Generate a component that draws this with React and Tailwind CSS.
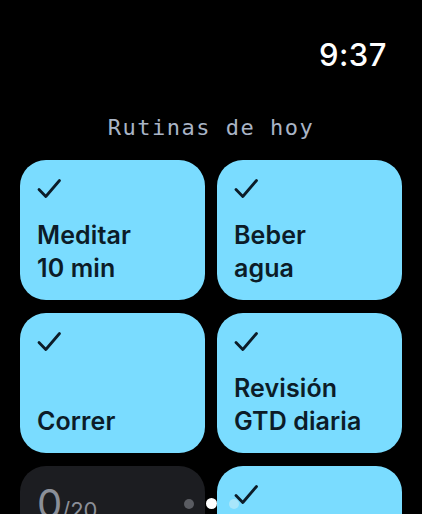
export default function App() {
  const routines = [
    { label: ["Meditar", "10 min"], done: true },
    { label: ["Beber", "agua"], done: true },
    { label: ["Correr"], done: true },
    { label: ["Revisión", "GTD diaria"], done: true },
  ];

  const Check = () => (
    <svg width="25" height="22" viewBox="0 0 25 22" className="text-[#0c1c28]">
      <path
        d="M2 11.5 L8.8 18.5 L22.5 2.5"
        fill="none"
        stroke="currentColor"
        strokeWidth="2.8"
        strokeLinecap="round"
        strokeLinejoin="round"
      />
    </svg>
  );

  return (
    <div className="relative w-[422px] h-[514px] overflow-hidden bg-black font-['Inter','Noto_Sans',sans-serif]">
      {/* Status bar */}
      <div className="flex justify-end pr-[35px] pt-[39px] h-[117px]">
        <span className="text-white text-[31px] font-medium leading-none tracking-[0.5px]">
          9:37
        </span>
      </div>

      {/* Title */}
      <h1 className="text-center text-[#a9b4c6] text-[22px] leading-none tracking-[1.5px] font-['DejaVu_Sans_Mono',monospace] h-[43px]">
        Rutinas de hoy
      </h1>

      {/* Grid */}
      <div className="grid grid-cols-2 gap-x-[12px] gap-y-[13px] px-[20px]">
        {routines.map((r) => (
          <div
            key={r.label.join(" ")}
            className="h-[140px] rounded-[26px] bg-[#7adcff] px-[17px] pt-[18px] pb-[15px] flex flex-col justify-between"
          >
            <Check />
            <div className="text-[#0c1c28] text-[25px] font-semibold leading-[33px] tracking-[0.1px]">
              {r.label.map((l) => (
                <div key={l}>{l}</div>
              ))}
            </div>
          </div>
        ))}

        {/* Counter card */}
        <div className="h-[140px] rounded-[26px] bg-[#1c1d21] px-[17px] pt-[18px]">
          <div className="flex items-baseline text-[#8b8f98] leading-none">
            <span className="text-[40px] font-normal">0</span>
            <span className="text-[22px]">/20</span>
          </div>
        </div>

        <div className="h-[140px] rounded-[26px] bg-[#7adcff] px-[17px] pt-[18px]">
          <Check />
        </div>
      </div>

      {/* Page dots */}
      <div className="absolute bottom-[5px] left-0 right-0 flex justify-center items-center gap-[12px]">
        <span className="w-[10px] h-[10px] rounded-full bg-[#5a5c62]" />
        <span className="w-[11px] h-[11px] rounded-full bg-white" />
        <span className="w-[10px] h-[10px] rounded-full bg-[#a8e6fb]" />
      </div>
    </div>
  );
}
